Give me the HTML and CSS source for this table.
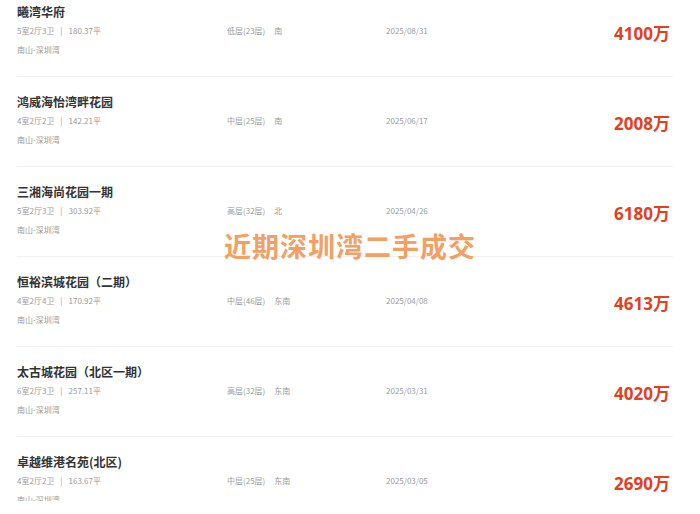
FILE: index.html
```html
<!DOCTYPE html>
<html lang="zh-CN">
<head>
    <meta charset="UTF-8">
    <meta name="viewport" content="width=device-width, initial-scale=1.0">
    <title>近期深圳湾二手成交</title>
    <link rel="stylesheet" href="styles.css">
</head>
<body>
    <div class="page">
        <ul class="deal-list">
            <li class="deal">
                <div class="deal-title">曦湾华府</div>
                <div class="deal-info">
                    <div class="deal-base">
                        <p>5室2厅3卫<span class="sep">|</span>180.37平</p>
                        <p>南山-深圳湾</p>
                    </div>
                    <p class="deal-floor">低层(23层)<span class="dir">南</span></p>
                    <p class="deal-date">2025/08/31</p>
                    <p class="deal-price">4100万</p>
                </div>
            </li>
            <li class="deal">
                <div class="deal-title">鸿威海怡湾畔花园</div>
                <div class="deal-info">
                    <div class="deal-base">
                        <p>4室2厅2卫<span class="sep">|</span>142.21平</p>
                        <p>南山-深圳湾</p>
                    </div>
                    <p class="deal-floor">中层(25层)<span class="dir">南</span></p>
                    <p class="deal-date">2025/06/17</p>
                    <p class="deal-price">2008万</p>
                </div>
            </li>
            <li class="deal">
                <div class="deal-title">三湘海尚花园一期</div>
                <div class="deal-info">
                    <div class="deal-base">
                        <p>5室2厅3卫<span class="sep">|</span>303.92平</p>
                        <p>南山-深圳湾</p>
                    </div>
                    <p class="deal-floor">高层(32层)<span class="dir">北</span></p>
                    <p class="deal-date">2025/04/26</p>
                    <p class="deal-price">6180万</p>
                </div>
            </li>
            <li class="deal">
                <div class="deal-title">恒裕滨城花园（二期）</div>
                <div class="deal-info">
                    <div class="deal-base">
                        <p>4室2厅4卫<span class="sep">|</span>170.92平</p>
                        <p>南山-深圳湾</p>
                    </div>
                    <p class="deal-floor">中层(46层)<span class="dir">东南</span></p>
                    <p class="deal-date">2025/04/08</p>
                    <p class="deal-price">4613万</p>
                </div>
            </li>
            <li class="deal">
                <div class="deal-title">太古城花园（北区一期）</div>
                <div class="deal-info">
                    <div class="deal-base">
                        <p>6室2厅3卫<span class="sep">|</span>257.11平</p>
                        <p>南山-深圳湾</p>
                    </div>
                    <p class="deal-floor">高层(32层)<span class="dir">东南</span></p>
                    <p class="deal-date">2025/03/31</p>
                    <p class="deal-price">4020万</p>
                </div>
            </li>
            <li class="deal">
                <div class="deal-title">卓越维港名苑(北区)</div>
                <div class="deal-info">
                    <div class="deal-base">
                        <p>4室2厅2卫<span class="sep">|</span>163.67平</p>
                        <p>南山-深圳湾</p>
                    </div>
                    <p class="deal-floor">中层(25层)<span class="dir">东南</span></p>
                    <p class="deal-date">2025/03/05</p>
                    <p class="deal-price">2690万</p>
                </div>
            </li>
        </ul>
        <div class="watermark">近期深圳湾二手成交</div>
    </div>
</body>
</html>
```

FILE: styles.css
```css
*{
    margin: 0;
    padding: 0;
    box-sizing: border-box;
}
body{
    background: #fff;
    font-family: "Noto Sans CJK SC", "Noto Sans", sans-serif;
    overflow: hidden;
}
.page{
    position: relative;
    height: 514px;
}
.deal-list{
    list-style: none;
    margin: -13px 27px 0 17px;
}
.deal{
    height: 90px;
    padding-top: 15px;
    border-bottom: 1px solid #f0f0f0;
}
.deal-title{
    font-size: 12px;
    line-height: 20px;
    font-weight: bold;
    color: #333;
}
.deal-info{
    display: grid;
    grid-template-columns: 210px 159px 1fr auto;
    align-items: start;
    font-size: 8px;
    color: #999;
}
.deal-base p{
    line-height: 18px;
}
.deal-base p + p{
    margin-top: 1px;
}
.deal-base .sep{
    margin: 0 6px;
}
.deal-floor, .deal-date{
    line-height: 18px;
}
.deal-floor .dir{
    margin-left: 9px;
}
.deal-price{
    font-size: 17px;
    line-height: 18px;
    margin-top: 3px;
    padding-right: 3px;
    font-weight: bold;
    color: #e2401f;
    font-family: "Open Sans", "Noto Sans CJK SC", sans-serif;
}
.watermark{
    position: absolute;
    left: 0;
    right: 0;
    top: 241px;
    text-align: center;
    font-size: 27px;
    line-height: 36px;
    font-weight: bold;
    color: #f2a063;
    letter-spacing: 1px;
}
```
